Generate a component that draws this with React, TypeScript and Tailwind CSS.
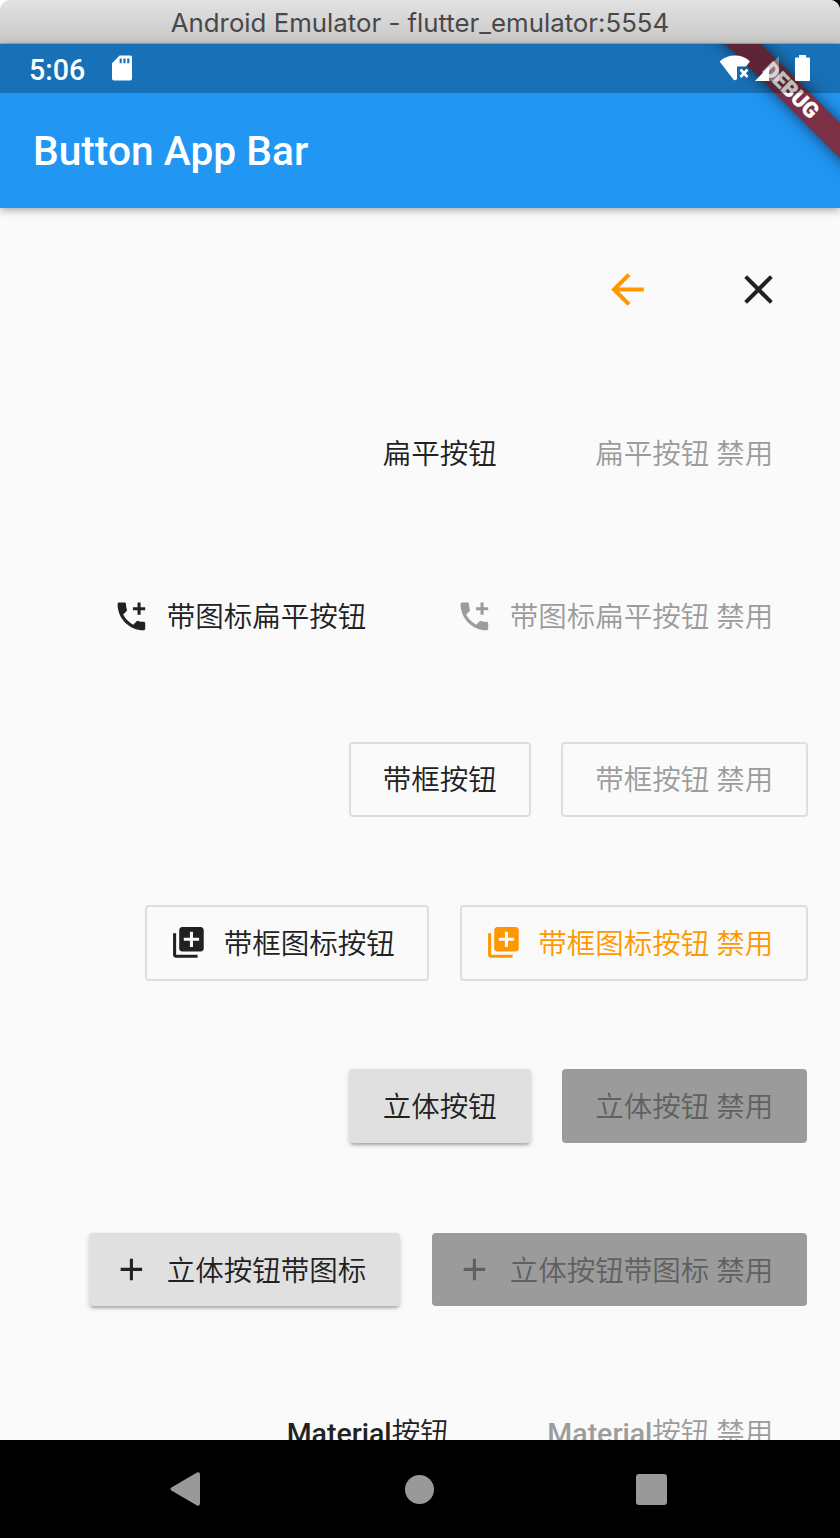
import type { ReactNode } from "react";
import {
  MdArrowBack,
  MdClose,
  MdAddIcCall,
  MdLibraryAdd,
  MdAdd,
} from "react-icons/md";

type Variant = "flat" | "outline" | "raised";

type ButtonProps = {
  children: ReactNode;
  icon?: ReactNode;
  variant?: Variant;
  disabled?: boolean;
  className?: string;
};

const variants: Record<Variant, string> = {
  flat: "text-[#212121]",
  outline: "text-[#212121] border-2 border-[#dedede]",
  raised:
    "text-[#212121] bg-[#e0e0e0] shadow-[0_4px_3px_-2px_rgba(0,0,0,0.2),0_2px_5px_0_rgba(0,0,0,0.18)]",
};

const disabledVariants: Record<Variant, string> = {
  flat: "text-[#9c9c9c]",
  outline: "text-[#9c9c9c] border-2 border-[#dedede]",
  raised: "text-[#606060] bg-[#9b9b9b]",
};

const Button = ({
  children,
  icon,
  variant = "flat",
  disabled,
  className = "",
}: ButtonProps) => {
  const look = disabled ? disabledVariants[variant] : variants[variant];
  // the outline sits half outside of the button's box
  const box =
    variant === "outline"
      ? `h-[75.6px] -mx-[0.5px] pr-[32.5px] ${icon ? "pl-[23px]" : "pl-[32px]"}`
      : `h-[73.6px] pr-[34px] ${icon ? "pl-[24.5px]" : "pl-[33.5px]"}`;
  return (
    <button
      disabled={disabled}
      className={`flex shrink-0 items-center gap-[17px] whitespace-nowrap rounded-[4px] text-[28.5px] font-[350] leading-[40px] ${box} ${look} ${className}`}
    >
      {icon}
      <span className="pt-[4px]">{children}</span>
    </button>
  );
};

const IconButton = ({ children }: { children: ReactNode }) => (
  <button className="flex size-[98px] items-center justify-center text-[49px]">
    {children}
  </button>
);

const Row = ({ children }: { children: ReactNode }) => (
  <div className="flex h-[163.4px] shrink-0 items-center justify-end gap-[31.2px] pr-[32.7px]">
    {children}
  </div>
);

const StatusBar = () => (
  <div className="relative z-10 flex h-[49.5px] items-center bg-black/25 pl-[29px] pr-[30px] text-white">
    <span className="pt-[5px] text-[28.6px] font-medium leading-[45px]">
      5:06
    </span>
    <svg className="ml-[27px] h-[26px] w-[20px]" viewBox="0 0 21 26">
      <path
        fill="currentColor"
        fillRule="evenodd"
        d="M8 0H19a2 2 0 0 1 2 2V24a2 2 0 0 1-2 2H2a2 2 0 0 1-2-2V8ZM8 3V8H10.200V3ZM12 3V8H14.200V3ZM16 3V8H18.200V3Z"
      />
    </svg>
    <svg className="ml-auto h-[26px] w-[32px]" viewBox="0 0 32 26">
      <path
        fill="currentColor"
        d="M.6 6.500C5 2.500 10 .6 16 .6S27 2.500 31 6.500L27 11.500H18V24Q16 26.500 14 24Z"
      />
      <path
        stroke="currentColor"
        strokeWidth="2.600"
        d="M21.500 14.500L28.500 22M28.500 14.500L21.500 22"
      />
    </svg>
    <svg className="ml-[4px] h-[26px] w-[24px]" viewBox="0 0 24 26">
      <path fill="currentColor" fillOpacity="0.35" d="M24 1V26H0Z" />
      <path fill="currentColor" d="M14 11.500V26H0Z" />
    </svg>
    <svg className="ml-[16px] h-[26px] w-[15px]" viewBox="0 0 15 26">
      <path
        fill="currentColor"
        d="M4 0H11V2.500H14a1 1 0 0 1 1 1V25a1 1 0 0 1-1 1H1a1 1 0 0 1-1-1V3.500a1 1 0 0 1 1-1H4Z"
      />
    </svg>
  </div>
);

const AppBar = () => (
  <header className="relative z-10 h-[164px] shrink-0 bg-[#2196f3] shadow-[0_2px_8px_rgba(0,0,0,0.35)]">
    <div className="relative h-full overflow-hidden">
      <StatusBar />
      <h1 className="pl-[33px] text-[40.7px] font-medium leading-[116px] text-white">
        Button App Bar
      </h1>
      <div className="absolute left-[668px] top-[37.5px] flex h-[24.5px] w-[250px] rotate-45 items-center justify-center bg-[#7b3046] pr-[7px] text-[21.5px] font-black text-white shadow-[0_0_16px_rgba(0,0,0,0.6)] [-webkit-text-stroke:0.3px_white]">
        DEBUG
      </div>
    </div>
  </header>
);

const NavBar = () => (
  <nav className="flex h-[98px] shrink-0 items-center bg-black pl-[170px] text-[#999]">
    <svg className="h-[34px] w-[30px]" viewBox="0 0 30 34">
      <path
        fill="currentColor"
        d="M1 15.800L27 .6Q30 -.4 30 2.500V31.500Q30 34.400 27 33.400L1 18.200Q0 17 1 15.800Z"
      />
    </svg>
    <span className="ml-[205px] size-[29px] rounded-full bg-[#999]" />
    <span className="ml-[202px] size-[31px] rounded-[3px] bg-[#999]" />
  </nav>
);

export default function App() {
  return (
    <div className="bg-linear-to-r from-white to-black">
      <div className="flex h-[1538px] w-[840px] flex-col overflow-hidden rounded-t-[10px] bg-[#fafafa] font-[Roboto,'Noto_Sans_CJK_SC',sans-serif]">
        <div className="flex h-[43.5px] shrink-0 items-center justify-center border-b border-[#a8a8a8] bg-linear-to-b from-[#e2e2e2] to-[#c8c8c8] pt-[4px] font-[Inter,sans-serif] text-[25.8px] text-[#484848]">
          Android Emulator - flutter_emulator:5554
        </div>
        <AppBar />
        <main className="min-h-0 flex-1 overflow-hidden">
          <Row>
            <div className="flex gap-[32.7px]">
              <IconButton>
                <MdArrowBack className="text-[#ff9800]" />
              </IconButton>
              <IconButton>
                <MdClose className="text-[#212121]" />
              </IconButton>
            </div>
          </Row>
          <Row>
            <Button>扁平按钮</Button>
            <Button disabled>扁平按钮 禁用</Button>
          </Row>
          <Row>
            <Button icon={<MdAddIcCall className="text-[36.8px]" />}>
              带图标扁平按钮
            </Button>
            <Button disabled icon={<MdAddIcCall className="text-[36.8px]" />}>
              带图标扁平按钮 禁用
            </Button>
          </Row>
          <Row>
            <Button variant="outline">带框按钮</Button>
            <Button variant="outline" disabled>
              带框按钮 禁用
            </Button>
          </Row>
          <Row>
            <Button
              variant="outline"
              icon={<MdLibraryAdd className="text-[36.8px]" />}
            >
              带框图标按钮
            </Button>
            <Button
              variant="outline"
              className="text-[#ff9800]!"
              icon={<MdLibraryAdd className="text-[36.8px]" />}
            >
              带框图标按钮 禁用
            </Button>
          </Row>
          <Row>
            <Button variant="raised">立体按钮</Button>
            <Button variant="raised" disabled>
              立体按钮 禁用
            </Button>
          </Row>
          <Row>
            <Button
              variant="raised"
              icon={<MdAdd className="text-[36.8px]" />}
            >
              立体按钮带图标
            </Button>
            <Button
              variant="raised"
              disabled
              icon={<MdAdd className="text-[36.8px]" />}
            >
              立体按钮带图标 禁用
            </Button>
          </Row>
          <Row>
            <Button className="pb-[2px]">
              <span className="font-medium">Material</span>按钮
            </Button>
            <Button disabled className="pb-[2px]">
              <span className="font-medium">Material</span>按钮 禁用
            </Button>
          </Row>
        </main>
        <NavBar />
      </div>
    </div>
  );
}
